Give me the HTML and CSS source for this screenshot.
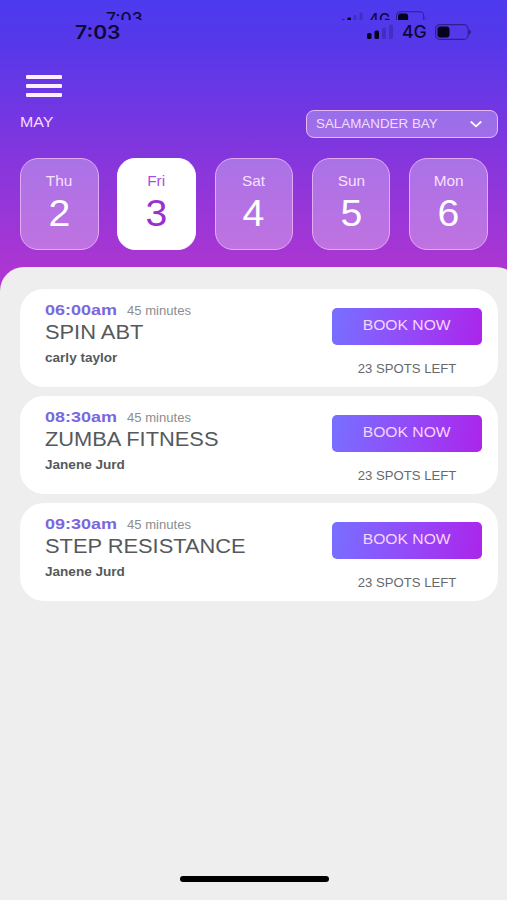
FILE: index.html
```html
<!DOCTYPE html>
<html lang="en">
<head>
  <meta charset="UTF-8">
  <meta name="viewport" content="width=device-width, initial-scale=1.0">
  <title>Class Bookings</title>
  <link rel="stylesheet" href="styles.css">
</head>
<body>
  <div class="app">
    <header class="header">
      <div class="status-bar status-bar-back">
        <span class="clock">7:03</span>
        <svg class="signal" width="23" height="14" viewBox="0 0 23 14">
          <rect x="0.5" y="7.5" width="3.5" height="5" rx="1"/>
          <rect x="6.5" y="5.5" width="3.5" height="8" rx="1"/>
          <rect class="faint" x="12.5" y="3" width="3" height="10" rx="1"/>
          <rect class="faint" x="18.5" y="0.5" width="3" height="13" rx="1"/>
        </svg>
        <span class="network">4G</span>
        <svg class="battery" width="31" height="14" viewBox="0 0 37 16">
          <rect class="shell" x="0.6" y="0.6" width="32.5" height="14.8" rx="4.5"/>
          <rect x="2.5" y="2.5" width="12" height="11" rx="3"/>
          <path class="faint" d="M34.5 5.5q2 2.5 0 5z"/>
        </svg>
      </div>
      <div class="status-bar">
        <span class="clock">7:03</span>
        <svg class="signal" width="27" height="16" viewBox="0 0 27 16">
          <rect x="0" y="9" width="4.5" height="6" rx="1.5"/>
          <rect x="7.5" y="6.5" width="4.5" height="8.5" rx="1.5"/>
          <rect class="faint" x="15" y="3.5" width="4" height="11.5" rx="1.5"/>
          <rect class="faint" x="22" y="0.5" width="4" height="14.5" rx="1.5"/>
        </svg>
        <span class="network">4G</span>
        <svg class="battery" width="37" height="16" viewBox="0 0 37 16">
          <rect class="shell" x="0.6" y="0.6" width="32.5" height="14.8" rx="4.5"/>
          <rect x="2.5" y="2.5" width="12" height="11" rx="3"/>
          <path d="M34.5 5.5q2 2.5 0 5z"/>
        </svg>
      </div>

      <div class="menu">
        <span></span>
        <span></span>
        <span></span>
      </div>

      <div class="toolbar">
        <div class="month">MAY</div>
        <div class="location">
          <span class="location-name">SALAMANDER BAY</span>
          <svg width="12" height="8" viewBox="0 0 12 8">
            <path d="M1.3 2L6 6.4L10.7 2" fill="none" stroke="#fff" stroke-width="1.8" stroke-linecap="round" stroke-linejoin="round"/>
          </svg>
        </div>
      </div>

      <div class="days">
        <div class="day"><span class="day-name">Thu</span><span class="day-number">2</span></div>
        <div class="day active"><span class="day-name">Fri</span><span class="day-number">3</span></div>
        <div class="day"><span class="day-name">Sat</span><span class="day-number">4</span></div>
        <div class="day"><span class="day-name">Sun</span><span class="day-number">5</span></div>
        <div class="day"><span class="day-name">Mon</span><span class="day-number">6</span></div>
      </div>
    </header>

    <main class="classes">
      <div class="card">
        <div class="info">
          <div class="when"><span class="time">06:00am</span><span class="length">45 minutes</span></div>
          <div class="title">SPIN ABT</div>
          <div class="trainer">carly taylor</div>
        </div>
        <div class="booking">
          <button class="book"><span>BOOK NOW</span></button>
          <div class="spots">23 SPOTS LEFT</div>
        </div>
      </div>
      <div class="card">
        <div class="info">
          <div class="when"><span class="time">08:30am</span><span class="length">45 minutes</span></div>
          <div class="title">ZUMBA FITNESS</div>
          <div class="trainer">Janene Jurd</div>
        </div>
        <div class="booking">
          <button class="book"><span>BOOK NOW</span></button>
          <div class="spots">23 SPOTS LEFT</div>
        </div>
      </div>
      <div class="card">
        <div class="info">
          <div class="when"><span class="time">09:30am</span><span class="length">45 minutes</span></div>
          <div class="title">STEP RESISTANCE</div>
          <div class="trainer">Janene Jurd</div>
        </div>
        <div class="booking">
          <button class="book"><span>BOOK NOW</span></button>
          <div class="spots">23 SPOTS LEFT</div>
        </div>
      </div>
    </main>

    <div class="home-bar"></div>
  </div>
</body>
</html>
```
FILE: styles.css
```css
/* General Styles */
* {
  box-sizing: border-box;
}

body {
  margin: 0;
  font-family: "Liberation Sans", Arial, sans-serif;
  background: #eeeeee;
  color: #55595c;
}

.app {
  width: 507px;
  height: 900px;
  overflow: hidden;
  display: flex;
  flex-direction: column;
  background: linear-gradient(to bottom, #4d3aee 0, #5538ea 40px, #8236de 150px, #ab36d2 265px, #b335cf 295px);
}

.header {
  height: 267px;
  flex: none;
}

/* Status bar */
.status-bar {
  display: flex;
  height: 24px;
  padding: 4px 0 0 75px;
  color: #0d0838;
  font-family: Inter, "Liberation Sans", sans-serif;
}

.status-bar svg {
  flex: none;
  fill: #06031c;
}

.status-bar .faint {
  opacity: 0.2;
}

.status-bar .shell {
  fill: none;
  stroke: #06031c;
  stroke-opacity: 0.45;
  stroke-width: 1.2;
}

.clock {
  width: 292px;
  font-size: 18.5px;
  font-weight: 600;
  line-height: 17px;
  transform: scaleX(1.14);
  transform-origin: left;
}

.network {
  width: 33px;
  margin-left: 8px;
  font-size: 17px;
  font-weight: 500;
  line-height: 17px;
  transform: scaleX(1.04);
  transform-origin: left;
}

.status-bar-back {
  height: 20px;
  padding: 11px 0 0 106px;
  overflow: hidden;
}

.status-bar-back .clock {
  width: 235px;
  font-size: 16px;
  font-weight: 500;
  line-height: 14px;
  transform: scaleX(1.08);
}

.status-bar-back .signal {
  margin-top: 1px;
}

.status-bar-back .network {
  width: 27px;
  margin-left: 5px;
  font-size: 14.5px;
  line-height: 15px;
}

/* Menu icon */
.menu {
  display: flex;
  flex-direction: column;
  gap: 5px;
  width: 36px;
  margin: 30.5px 0 0 26px;
}

.menu span {
  height: 4px;
  border-radius: 1px;
  background: #fdeeff;
}

/* Month and location */
.toolbar {
  display: flex;
  justify-content: space-between;
  padding: 13.5px 9px 0 20px;
}

.month {
  color: #f5dcff;
  font-size: 14.5px;
  line-height: 25px;
  transform: scaleX(1.1);
  transform-origin: left;
}

.location {
  display: flex;
  justify-content: space-between;
  align-items: center;
  width: 192.5px;
  height: 28px;
  padding: 0 15px 0 9px;
  border: 1.5px solid #e9b8f7;
  border-radius: 8px;
  background: rgba(255, 255, 255, 0.28);
}

.location-name {
  color: #f5dcff;
  font-size: 12.5px;
  line-height: 24px;
  transform: scaleX(1.07);
  transform-origin: left;
}

/* Days */
.days {
  display: flex;
  justify-content: space-between;
  padding: 20px 19.5px 0 20px;
}

.day {
  display: flex;
  flex-direction: column;
  align-items: center;
  width: 78.5px;
  height: 91.5px;
  padding-top: 12px;
  border: 1.5px solid #e3abf7;
  border-radius: 18px;
  background: rgba(255, 255, 255, 0.3);
  color: #fff;
}

.day.active {
  background: #fff;
  border-color: #fff;
  color: #9a2fd0;
}

.day-name {
  color: #f8e0ff;
  font-size: 14px;
  line-height: 20px;
  transform: scaleX(1.1);
}

.active .day-name {
  color: #a94fdb;
}

.day-number {
  font-size: 37px;
  line-height: 45px;
  transform: scaleX(1.06);
}

/* Classes */
.classes {
  flex: 1;
  display: flex;
  flex-direction: column;
  gap: 9px;
  width: 520px;
  padding: 21.5px 22.5px 0 20px;
  border-radius: 24px 24px 0 0;
  background: #eeeeee;
}

.card {
  display: flex;
  justify-content: space-between;
  height: 98px;
  padding: 11px 15.5px 0 25px;
  border-radius: 24px;
  background: #fff;
}

.when {
  display: flex;
  align-items: baseline;
  height: 19px;
  line-height: 19px;
}

.time {
  width: 82px;
  color: #7a67df;
  font-size: 15.5px;
  font-weight: bold;
  transform: scaleX(1.16);
  transform-origin: left;
}

.length {
  color: #8b8d90;
  font-size: 12px;
  transform: scaleX(1.09);
  transform-origin: left;
}

.title {
  font-size: 20.5px;
  line-height: 25px;
  white-space: nowrap;
  transform: scaleX(1.065);
  transform-origin: left;
}

.trainer {
  margin-top: 5px;
  font-size: 12px;
  font-weight: bold;
  line-height: 18px;
  transform: scaleX(1.13);
  transform-origin: left;
}

.booking {
  width: 150px;
  padding-top: 8px;
  text-align: center;
}

.book {
  display: block;
  width: 150px;
  height: 37.5px;
  padding: 0 0 3px;
  border: none;
  border-radius: 5px;
  background: linear-gradient(100deg, #7770ff, #9547f8 55%, #ab25ea);
  color: #f6d5ff;
  font-family: inherit;
  font-size: 14.5px;
}

.book span {
  display: inline-block;
  transform: scaleX(1.08);
}

.spots {
  margin-top: 14.5px;
  color: #66696c;
  font-size: 12.5px;
  line-height: 18px;
  transform: scaleX(1.05);
}

/* Home bar */
.home-bar {
  flex: none;
  height: 24px;
  padding-left: 179.5px;
  background: #eeeeee;
}

.home-bar::before {
  content: "";
  display: block;
  width: 149px;
  height: 5.5px;
  border-radius: 3px;
  background: #000;
}
```
